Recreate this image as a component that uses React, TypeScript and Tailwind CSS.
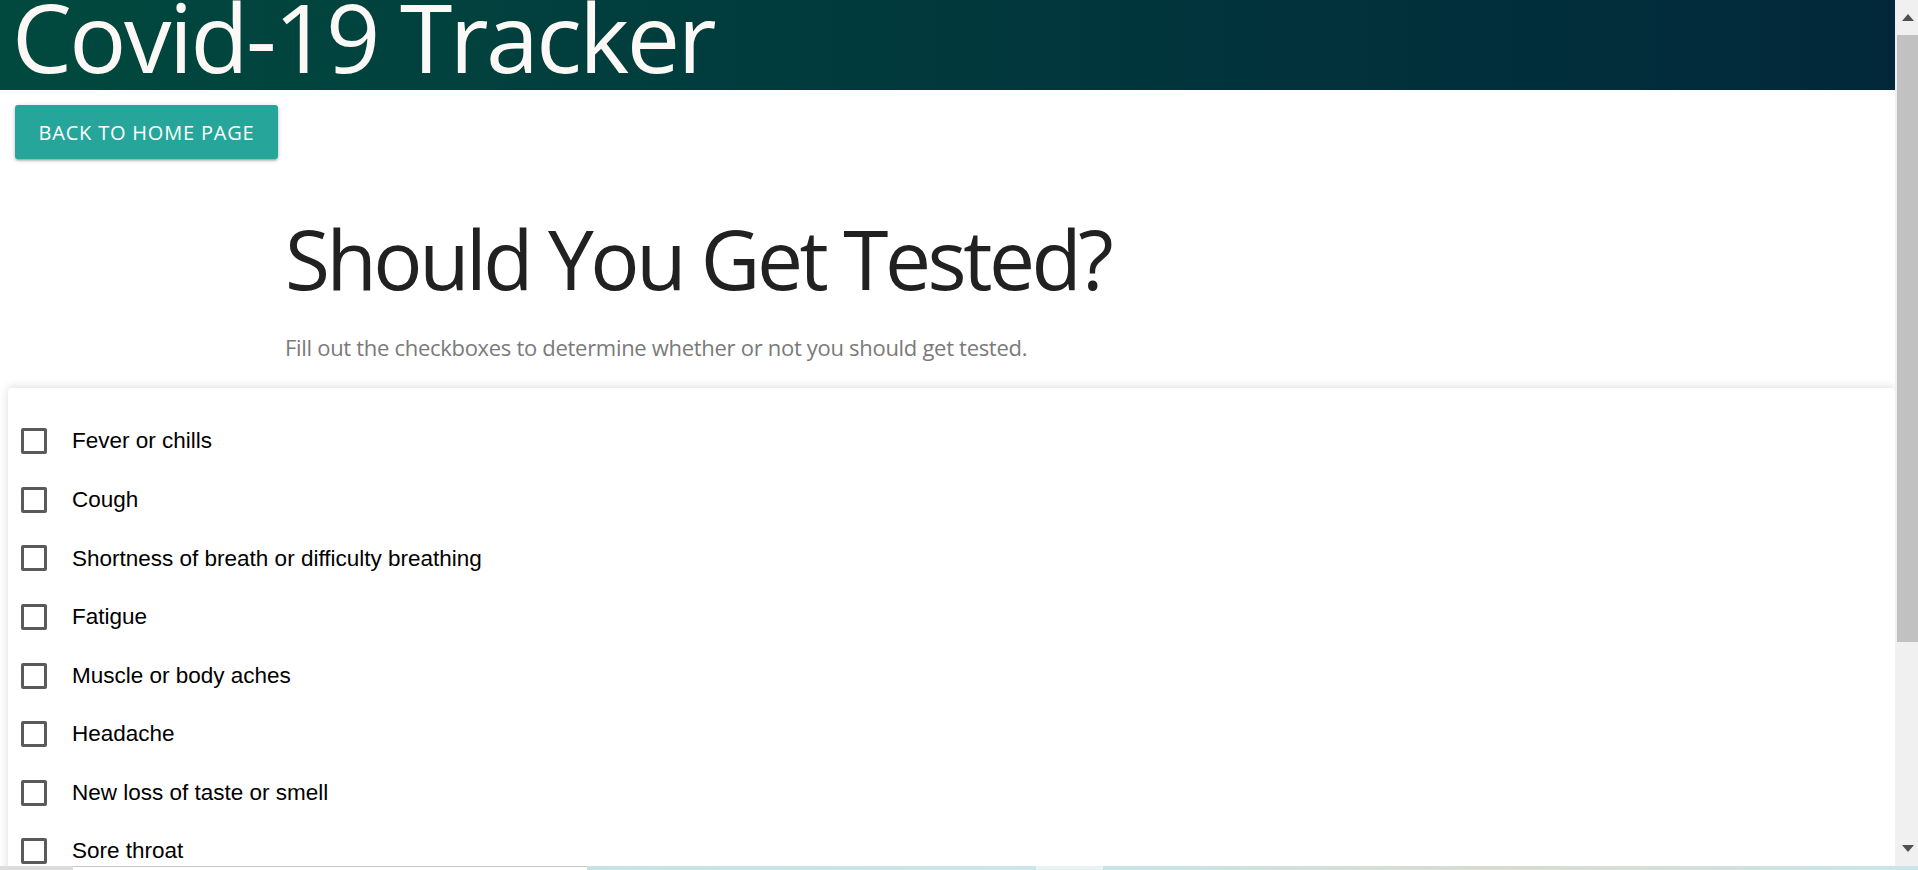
const symptoms = [
  "Fever or chills",
  "Cough",
  "Shortness of breath or difficulty breathing",
  "Fatigue",
  "Muscle or body aches",
  "Headache",
  "New loss of taste or smell",
  "Sore throat",
  "Congestion or runny nose",
  "Nausea or vomiting",
];

const segoe = { fontFamily: '"Open Sans", "Noto Sans", sans-serif' };

function SymptomRow({ label }: { label: string }) {
  return (
    <label className="flex h-[58.57px] items-center">
      <span className="h-[26px] w-[26px] shrink-0 rounded-[2px] border-[3px] border-[#5a5a5a]" />
      <span className="ml-[25px] text-[22.5px] text-black" style={{ fontFamily: '"Liberation Sans", Arial, sans-serif' }}>
        {label}
      </span>
    </label>
  );
}

function Scrollbar() {
  return (
    <div className="flex h-full w-[23px] shrink-0 flex-col bg-[#f0f0f0]">
      <div className="flex h-[35px] items-center justify-center pl-[2px]">
        <svg width="12" height="7" viewBox="0 0 12 7">
          <path d="M6 0 L12 7 L0 7 Z" fill="#505050" />
        </svg>
      </div>
      <div className="ml-[2px] h-[607px] bg-[#c1c1c1]" />
      <div className="flex-1" />
      <div className="flex h-[35px] items-center justify-center pl-[2px]">
        <svg width="12" height="7" viewBox="0 0 12 7">
          <path d="M0 0 L12 0 L6 7 Z" fill="#505050" />
        </svg>
      </div>
    </div>
  );
}

function Taskbar() {
  return (
    <div className="flex h-[4px] w-full">
      <div className="w-[73px] bg-[#dcdcdc]" />
      <div className="w-[514px] border-t border-[#c8c8c8] bg-white" />
      <div className="w-[449px] bg-linear-to-r from-[#c6e2e2] to-[#cde6e8]" />
      <div className="w-[67px] bg-[#e8f4f4]" />
      <div className="flex-1 bg-linear-to-r from-[#c8e4e6] via-[#d9dccf] to-[#c9e6ea]" />
    </div>
  );
}

export default function App() {
  return (
    <div className="flex h-[870px] w-full flex-col overflow-hidden bg-white">
      <div className="flex h-[866px]">
        <main className="flex-1 overflow-hidden">
          <header className="h-[90px] bg-linear-to-r from-[#01493e] to-[#02283a] pl-[12px]">
            <h1
              className="whitespace-nowrap text-[95px] leading-[72px] tracking-[-2.5px] text-[#fbf8f5]"
              style={segoe}
            >
              Covid-19 Tracker
            </h1>
          </header>

          <div className="pl-[15px] pt-[15px]">
            <button
              className="flex h-[54px] w-[263px] items-center justify-center rounded-[3px] bg-[#26a69a] pt-[2px] text-[20px] uppercase tracking-[0.8px] text-white shadow-[0_2px_2px_0_rgba(0,0,0,0.14),0_3px_1px_-2px_rgba(0,0,0,0.12),0_1px_5px_0_rgba(0,0,0,0.2)]"
              style={segoe}
            >
              Back to home page
            </button>
          </div>

          {/* Intro */}
          <div className="pl-[285px]">
            <h2
              className="mt-[58px] whitespace-nowrap text-[82px] leading-none tracking-[-3.45px] text-[#212121]"
              style={segoe}
            >
              Should You Get Tested?
            </h2>
            <p
              className="mt-[37px] whitespace-nowrap text-[22px] leading-none tracking-[-0.3px] text-[#7a7a7a]"
              style={segoe}
            >
              Fill out the checkboxes to determine whether or not you should get tested.
            </p>
          </div>

          <section className="ml-[8px] mt-[30px] rounded-[4px] bg-white pl-[13px] pt-[24px] shadow-[0_-1px_10px_rgba(0,0,0,0.14)]">
            {symptoms.map((s) => (
              <SymptomRow key={s} label={s} />
            ))}
          </section>
        </main>
        <Scrollbar />
      </div>
      <Taskbar />
    </div>
  );
}
